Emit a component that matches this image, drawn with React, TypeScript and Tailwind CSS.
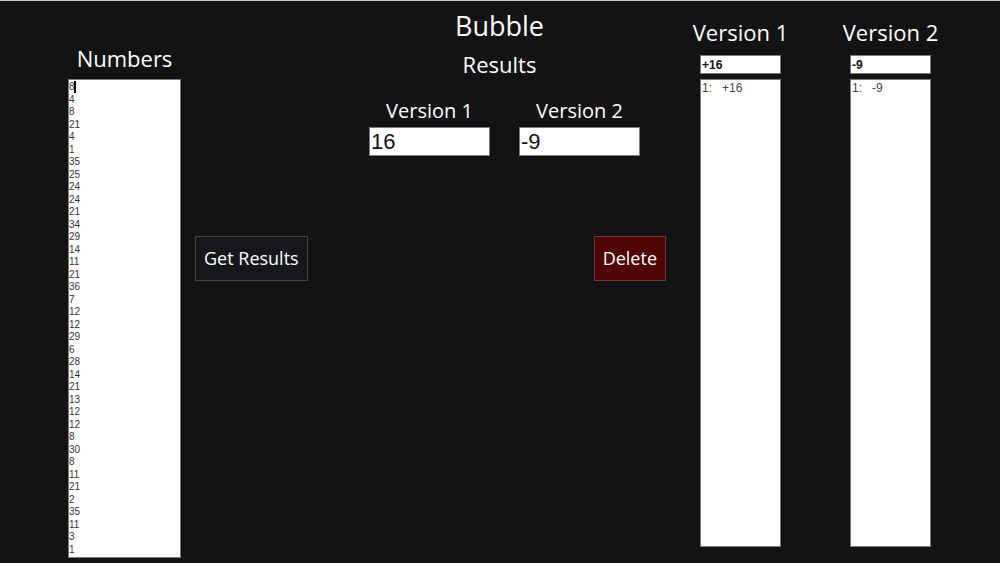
import React, { useState } from "react";

const startNumbers = [
  8, 4, 8, 21, 4, 1, 35, 25, 24, 24, 21, 34, 29, 14, 11, 21, 36, 7, 12, 12, 29,
  6, 28, 14, 21, 13, 12, 12, 8, 30, 8, 11, 21, 2, 35, 11, 3, 1,
];

const versions = [
  { id: "v1", name: "Version 1", result: "16", total: "+16", log: "1:   +16" },
  { id: "v2", name: "Version 2", result: "-9", total: "-9", log: "1:   -9" },
];

const fieldClass =
  "block w-full rounded-none border border-[#7a7a7a] bg-white font-['Liberation_Sans',sans-serif] outline-none";

function NumbersColumn() {
  const [numbers, setNumbers] = useState(startNumbers.join("\n"));

  return (
    <div className="w-[113px] shrink-0 pt-[41px]">
      <label
        htmlFor="numbers"
        className="block pb-1 text-center text-[22px] leading-[33px]"
      >
        Numbers
      </label>
      <div className="relative">
        <textarea
          id="numbers"
          rows={38}
          value={numbers}
          onChange={(e) => setNumbers(e.target.value)}
          className={`${fieldClass} resize-none overflow-hidden pb-px pt-px text-[10px] leading-tight text-[#333]`}
        />
        {/* Text cursor */}
        <span className="absolute left-1.5 top-0.5 h-3 w-0.5 bg-black"></span>
      </div>
    </div>
  );
}

function Results() {
  return (
    <div className="self-end pr-[26px]">
      <div className="pr-2.5 text-center">
        <h1 className="text-[27px] leading-[36px]">Bubble</h1>
        <h2 className="pt-1 text-[22px] leading-[33px]">Results</h2>
      </div>
      <div className="flex gap-[29px] pt-[18px]">
        {versions.map((item) => (
          <div key={item.id} className="w-[121px]">
            <label
              htmlFor={`${item.id}-result`}
              className="block pb-1 text-center text-[20px] leading-[24px]"
            >
              {item.name}
            </label>
            <input
              id={`${item.id}-result`}
              readOnly
              value={item.result}
              className={`${fieldClass} h-[29px] px-px text-[22px] text-[#111]`}
            />
          </div>
        ))}
      </div>
    </div>
  );
}

function App() {
  return (
    <main className="flex min-h-screen border-t border-[#c4cccc] bg-[#131313] pl-[68px] pr-[59px] font-['Open_Sans',sans-serif] text-white">
      <NumbersColumn />

      {/* Results and buttons */}
      <div className="flex flex-1 flex-col pl-3.5 pr-6 pt-[7px]">
        <Results />
        <div className="flex justify-between pt-20">
          <button className="h-[45px] border border-[#444] bg-[#15171b] px-2 text-[18px]">
            Get Results
          </button>
          <button className="h-[45px] border border-[#6b3c3c] bg-[#500404] px-2 text-[18px]">
            Delete
          </button>
        </div>
      </div>

      {/* History of each version */}
      <div className="flex gap-[49px] pb-4 pt-[15px]">
        {versions.map((item) => (
          <div key={item.id} className="flex w-[101px] flex-col">
            <label
              htmlFor={`${item.id}-total`}
              className="whitespace-nowrap pb-1.5 text-center text-[22px] leading-[33px]"
            >
              {item.name}
            </label>
            <div className="flex flex-1 flex-col gap-[5px] px-2.5">
              <input
                id={`${item.id}-total`}
                readOnly
                value={item.total}
                className={`${fieldClass} h-[19px] px-px text-[12px] font-bold text-[#111]`}
              />
              <textarea
                aria-label={`${item.name} history`}
                readOnly
                value={item.log}
                className={`${fieldClass} flex-1 resize-none px-px text-[12px] leading-[16px] text-[#444]`}
              />
            </div>
          </div>
        ))}
      </div>
    </main>
  );
}

export default App;
